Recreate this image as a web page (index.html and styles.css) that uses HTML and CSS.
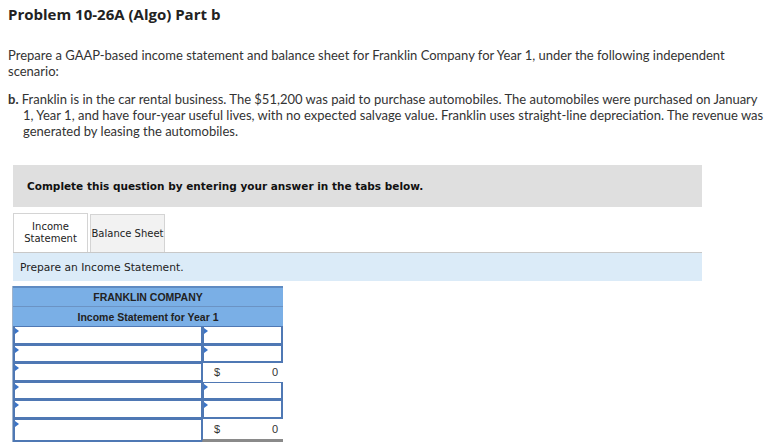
FILE: index.html
```html
<!DOCTYPE html>
<html>
<head>
<meta charset="utf-8">
<link rel="stylesheet" href="styles.css">
</head>
<body>
<h1 class="title">Problem 10-26A (Algo) Part b</h1>
<p class="intro">Prepare a GAAP-based income statement and balance sheet for Franklin Company for Year 1, under the following independent scenario:</p>
<p class="scenario"><b>b.</b> Franklin is in the car rental business. The $51,200 was paid to purchase automobiles. The automobiles were purchased on January 1, Year 1, and have four-year useful lives, with no expected salvage value. Franklin uses straight-line depreciation. The revenue was generated by leasing the automobiles.</p>

<div class="instructions">Complete this question by entering your answer in the tabs below.</div>

<div class="tabs">
  <div class="tab active">Income<br>Statement</div>
  <div class="tab">Balance Sheet</div>
</div>
<div class="prompt">Prepare an Income Statement.</div>

<div class="sheet">
  <div class="head">FRANKLIN COMPANY</div>
  <div class="head">Income Statement for Year 1</div>
  <div class="row"><div class="cell label input"></div><div class="cell amt input"></div></div>
  <div class="row"><div class="cell label input"></div><div class="cell amt input"></div></div>
  <div class="row"><div class="cell label input"></div><div class="cell amt total"><span>$</span><span>0</span></div></div>
  <div class="row"><div class="cell label input"></div><div class="cell amt input"></div></div>
  <div class="row"><div class="cell label input"></div><div class="cell amt input"></div></div>
  <div class="row tall"><div class="cell label input"></div><div class="cell amt total last"><span>$</span><span>0</span></div></div>
</div>
</body>
</html>
```
FILE: styles.css
```css
body {
  margin: 0;
  font-family: "Lato", "Open Sans", sans-serif;
  color: #222;
  background: #fff;
}
.title {
  margin: 0;
  padding: 5px 8px 0;
  font-family: "Open Sans", "Lato", sans-serif;
  font-size: 15px;
  line-height: 19px;
  font-weight: 700;
  color: #222;
}
.intro, .scenario {
  font-size: 13px;
  line-height: 16px;
  margin: 0;
  padding: 0 10px 0 8px;
  color: #333;
}
.intro { margin-top: 23px; }
.scenario {
  margin-top: 12px;
  padding-left: 23px;
  text-indent: -15px;
}
.scenario b { font-weight: 700; }
.instructions {
  margin: 26px 0 0 13px;
  width: 675px;
  height: 42px;
  padding-left: 14px;
  background: #dfdfdf;
  display: flex;
  align-items: center;
  font-family: "DejaVu Sans", Verdana, sans-serif;
  font-weight: 700;
  font-size: 10.5px;
  color: #111;
}
.tabs {
  display: flex;
  gap: 2px;
  margin: 6px 0 0 13px;
  height: 39px;
  align-items: flex-end;
}
.tab {
  width: 73px;
  height: 37px;
  border: 1px solid #d4d4d4;
  border-bottom: none;
  background: #f2f2f2;
  display: flex;
  align-items: center;
  justify-content: center;
  text-align: center;
  font-family: "DejaVu Sans", Verdana, sans-serif;
  font-size: 10px;
  line-height: 12px;
  color: #222;
}
.tab.active {
  background: #fff;
  height: 38px;
}
.prompt {
  margin-left: 13px;
  width: 682px;
  height: 28px;
  padding-left: 7px;
  border-top: 1px solid #c8c8c8;
  background: #dbebf8;
  display: flex;
  align-items: center;
  font-family: "DejaVu Sans", Verdana, sans-serif;
  font-size: 10.7px;
  color: #222;
}
.sheet {
  margin: 5px 0 0 12px;
  width: 270px;
  border-left: 1px solid #9fb3cc;
}
.head {
  height: 18px;
  border-top: 2px solid #5f8bc2;
  background: #7aafe6;
  display: flex;
  align-items: center;
  justify-content: center;
  font-family: "Liberation Sans", Arial, sans-serif;
  font-weight: 700;
  font-size: 10.5px;
  color: #222;
}
.head + .head { border-top: 1px solid #6b93c4; height: 19px; }
.row {
  display: flex;
  height: 18.6px;
}
.row.tall { height: 23px; }
.cell {
  box-sizing: border-box;
  position: relative;
  background: #fff;
}
.label { width: 189px; }
.amt { width: 81px; }
.input {
  border: 2px solid #4f78b4;
  border-right-width: 1px;
  border-top-width: 1px;
}
.amt.input { border-left-width: 2px; border-right-width: 2px; }
.input::before {
  content: "";
  position: absolute;
  left: 0;
  top: 1px;
  border-left: 4px solid #3a74c8;
  border-top: 3px solid transparent;
  border-bottom: 3px solid transparent;
}
.total {
  border-left: 1px solid #4f78b4;
  display: flex;
  justify-content: space-between;
  align-items: center;
  padding: 0 5px 0 11px;
  font-family: "Liberation Sans", Arial, sans-serif;
  font-size: 11px;
  color: #333;
}
.total.last {
  border-bottom: 3px solid #8a8a8a;
}
```
